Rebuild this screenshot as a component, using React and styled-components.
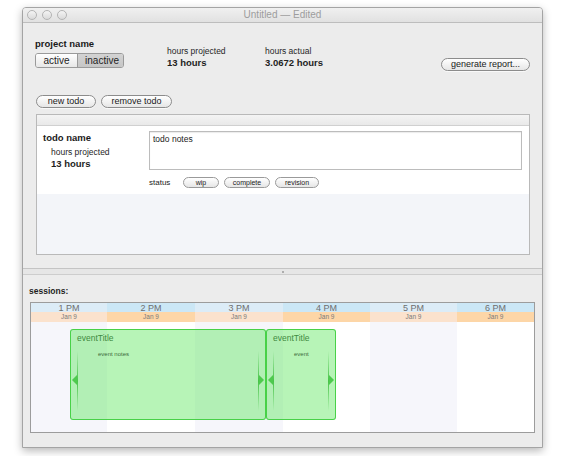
import React from 'react';
import styled, { createGlobalStyle } from 'styled-components';

const hours = [
  { label: '1 PM', width: 77 },
  { label: '2 PM', width: 88 },
  { label: '3 PM', width: 88 },
  { label: '4 PM', width: 87 },
  { label: '5 PM', width: 87 },
  { label: '6 PM', width: 78 },
];

const sessions = [
  { id: 1, title: 'eventTitle', notes: 'event notes', left: 39, width: 196 },
  { id: 2, title: 'eventTitle', notes: 'event', left: 235, width: 70 },
];

const App = () => {
  return (
    <>
      <GlobalStyle />
      <Page>
        <Window>
          <TitleBar>
            <Lights>
              <Light />
              <Light />
              <Light />
            </Lights>
            <WindowTitle>Untitled — Edited</WindowTitle>
          </TitleBar>

          <TopPane>
            <Header>
              <ProjectBlock>
                <Label>project name</Label>
                <Segmented>
                  <Segment>active</Segment>
                  <Segment $selected>inactive</Segment>
                </Segmented>
              </ProjectBlock>
              <Stat $width={98}>
                <SmallText>hours projected</SmallText>
                <Value>13 hours</Value>
              </Stat>
              <Stat>
                <SmallText>hours actual</SmallText>
                <Value>3.0672 hours</Value>
              </Stat>
              <PillButton $top={20} $width={89}>generate report...</PillButton>
            </Header>

            <Toolbar>
              <PillButton $width={60}>new todo</PillButton>
              <PillButton $width={71}>remove todo</PillButton>
            </Toolbar>

            <TodoTable>
              <TableHead />
              <TodoRow>
                <TodoInfo>
                  <Label>todo name</Label>
                  <Indented>
                    <SmallText>hours projected</SmallText>
                    <Value>13 hours</Value>
                  </Indented>
                </TodoInfo>
                <TodoDetail>
                  <Notes>todo notes</Notes>
                  <StatusRow>
                    <StatusLabel>status</StatusLabel>
                    <StatusButton $width={36}>wip</StatusButton>
                    <StatusButton $width={46}>complete</StatusButton>
                    <StatusButton $width={44}>revision</StatusButton>
                  </StatusRow>
                </TodoDetail>
              </TodoRow>
              <EmptyRows />
            </TodoTable>
          </TopPane>

          <Splitter>
            <Grip />
          </Splitter>

          <BottomPane>
            <SectionLabel>sessions:</SectionLabel>
            <Calendar>
              <Columns>
                {hours.map((h, i) => (
                  <Column key={h.label} $width={h.width}>
                    <HourCell $alt={i % 2 === 1}>{h.label}</HourCell>
                    <DateCell $alt={i % 2 === 1}>Jan 9</DateCell>
                    <Slot $alt={i % 2 === 1} />
                  </Column>
                ))}
              </Columns>
              <Track>
                {sessions.map((s) => (
                  <Session key={s.id} style={{ left: s.left, width: s.width }}>
                    <SessionTitle>{s.title}</SessionTitle>
                    <SessionNotes>{s.notes}</SessionNotes>
                    <Handle $side="left" />
                    <Handle $side="right" />
                  </Session>
                ))}
              </Track>
            </Calendar>
          </BottomPane>
        </Window>
      </Page>
    </>
  );
};

export default App;

const GlobalStyle = createGlobalStyle`
  body {
    margin: 0;
    background: #ffffff;
    font-family: "Liberation Sans", Arial, sans-serif;
    color: #1e1e1e;
  }
`;

const Page = styled.div`
  width: 570px;
  height: 456px;
  padding: 7px 0 0 22px;
  box-sizing: border-box;
`;

const Window = styled.div`
  width: 521px;
  height: 441px;
  box-sizing: border-box;
  border: 1px solid #a4a4a4;
  border-radius: 4px 4px 0 0;
  background: #ececec;
  box-shadow: 0 3px 9px rgba(0, 0, 0, 0.28);
  display: flex;
  flex-direction: column;
  overflow: hidden;
`;

const TitleBar = styled.div`
  height: 14px;
  flex: none;
  border-bottom: 1px solid #bdbdbd;
  background: linear-gradient(#f0f0f0, #e1e1e1);
  position: relative;
  display: flex;
  align-items: center;
  justify-content: center;
`;

const Lights = styled.div`
  position: absolute;
  left: 4px;
  top: 2px;
  display: flex;
  gap: 5px;
`;

const Light = styled.span`
  width: 8px;
  height: 8px;
  border-radius: 50%;
  border: 1px solid #b3b3b3;
  background: linear-gradient(#f4f4f4, #dadada);
`;

const WindowTitle = styled.span`
  font-size: 10px;
  color: #9d9d9d;
  line-height: 14px;
`;

const TopPane = styled.div`
  height: 245px;
  flex: none;
  box-sizing: border-box;
  padding: 15px 12px 0 12px;
`;

const Header = styled.div`
  display: flex;
  align-items: flex-start;
  height: 33px;
`;

const ProjectBlock = styled.div`
  width: 132px;
  display: flex;
  flex-direction: column;
  gap: 3px;
`;

const Label = styled.div`
  font-size: 9.5px;
  font-weight: 700;
  line-height: 12px;
  color: #1a1a1a;
`;

const Segmented = styled.div`
  display: flex;
  width: 89px;
  height: 15px;
  box-sizing: border-box;
  border: 1px solid #9a9a9a;
  border-radius: 3px;
  overflow: hidden;
`;

const Segment = styled.div`
  flex: ${(p) => (p.$selected ? '48px' : '41px')} 0 0;
  display: flex;
  align-items: center;
  justify-content: center;
  font-size: 10px;
  color: #1e1e1e;
  background: ${(p) =>
    p.$selected ? 'linear-gradient(#d3d3d3, #c6c6c6)' : 'linear-gradient(#ffffff, #e7e7e7)'};
  & + & {
    border-left: 1px solid #9a9a9a;
  }
`;

const Stat = styled.div`
  width: ${(p) => (p.$width ? `${p.$width}px` : 'auto')};
  flex: ${(p) => (p.$width ? 'none' : '1')};
  margin-top: 8px;
`;

const SmallText = styled.div`
  font-size: 8.5px;
  line-height: 11px;
  color: #262626;
`;

const Value = styled.div`
  font-size: 9.5px;
  font-weight: 700;
  line-height: 12px;
  color: #1e1e1e;
`;

const PillButton = styled.button`
  flex: none;
  width: ${(p) => p.$width}px;
  height: 13px;
  margin-top: ${(p) => p.$top || 0}px;
  padding: 0;
  box-sizing: border-box;
  border: 1px solid #8c8c8c;
  border-radius: 7px;
  background: linear-gradient(#ffffff, #e6e6e6);
  font-family: inherit;
  font-size: 9px;
  line-height: 11px;
  color: #1a1a1a;
  box-shadow: 0 1px 0 rgba(255, 255, 255, 0.7);
`;

const Toolbar = styled.div`
  display: flex;
  gap: 5px;
  margin: 24px 0 0 1px;
`;

const TodoTable = styled.div`
  margin: 6px 0 0 1px;
  height: 141px;
  box-sizing: border-box;
  border: 1px solid #b9b9b9;
  background: #f3f5f9;
  display: flex;
  flex-direction: column;
`;

const TableHead = styled.div`
  height: 10px;
  flex: none;
  border-bottom: 1px solid #d0d0d0;
  background: linear-gradient(#f4f4f4, #e9e9e9);
`;

const TodoRow = styled.div`
  height: 68px;
  flex: none;
  display: flex;
  background: #ffffff;
`;

const TodoInfo = styled.div`
  width: 112px;
  flex: none;
  box-sizing: border-box;
  padding: 6px 0 0 6px;
`;

const Indented = styled.div`
  padding-left: 8px;
  margin-top: 3px;
`;

const TodoDetail = styled.div`
  flex: 1;
  padding: 5px 7px 0 0;
`;

const Notes = styled.div`
  height: 39px;
  box-sizing: border-box;
  border: 1px solid #bcbcbc;
  box-shadow: inset 0 1px 1px rgba(0, 0, 0, 0.08);
  padding: 2px 3px;
  font-size: 8.5px;
  line-height: 11px;
  color: #222;
`;

const StatusRow = styled.div`
  display: flex;
  align-items: center;
  gap: 5px;
  margin-top: 7px;
`;

const StatusLabel = styled.span`
  width: 29px;
  font-size: 8px;
  color: #222;
`;

const StatusButton = styled(PillButton)`
  height: 11px;
  font-size: 7px;
  line-height: 9px;
  border-color: #9a9a9a;
`;

const EmptyRows = styled.div`
  flex: 1;
`;

const Splitter = styled.div`
  height: 5px;
  flex: none;
  border-top: 1px solid #c4c4c4;
  border-bottom: 1px solid #cdcdcd;
  background: #e6e6e6;
  display: flex;
  align-items: center;
  justify-content: center;
`;

const Grip = styled.span`
  width: 2px;
  height: 2px;
  border-radius: 50%;
  background: #9a9a9a;
`;

const BottomPane = styled.div`
  flex: 1;
  padding: 11px 7px 0 6px;
`;

const SectionLabel = styled.div`
  font-size: 8.5px;
  font-weight: 700;
  line-height: 11px;
  color: #1e1e1e;
`;

const Calendar = styled.div`
  position: relative;
  margin: 5px 0 0 1px;
  height: 131px;
  box-sizing: border-box;
  border: 1px solid #9c9c9c;
  background: #ffffff;
`;

const Columns = styled.div`
  display: flex;
  height: 100%;
`;

const Column = styled.div`
  width: ${(p) => p.$width}px;
  flex: ${(p) => (p.$width < 80 ? '1 1 auto' : 'none')};
  display: flex;
  flex-direction: column;
`;

const HourCell = styled.div`
  height: 9px;
  background: ${(p) => (p.$alt ? '#cbe7f6' : '#dcecf7')};
  text-align: center;
  font-size: 9px;
  line-height: 10px;
  color: #6e6e6e;
`;

const DateCell = styled.div`
  height: 10px;
  background: ${(p) => (p.$alt ? '#fdd6a7' : '#fbe2cd')};
  text-align: center;
  font-size: 6.5px;
  line-height: 10px;
  color: #7a7a7a;
`;

const Slot = styled.div`
  flex: 1;
  background: ${(p) => (p.$alt ? '#ffffff' : '#f6f6fb')};
`;

const Track = styled.div`
  position: absolute;
  left: 0;
  right: 0;
  top: 19px;
  bottom: 0;
`;

const Session = styled.div`
  position: absolute;
  top: 7px;
  height: 91px;
  box-sizing: border-box;
  border: 1px solid rgba(60, 205, 60, 0.9);
  border-radius: 3px;
  background: rgba(95, 230, 95, 0.45);
  padding: 3px 0 0 6px;
`;

const SessionTitle = styled.div`
  font-size: 8.5px;
  line-height: 10px;
  color: #3f8a3f;
`;

const SessionNotes = styled.div`
  margin: 7px 0 0 21px;
  font-size: 6px;
  line-height: 8px;
  color: #3c6b3c;
`;

const Handle = styled.span`
  position: absolute;
  top: 21px;
  height: 60px;
  width: 1px;
  ${(p) => (p.$side === 'left' ? 'left: 6px;' : 'right: 6px;')}
  background: linear-gradient(rgba(60, 190, 60, 0), rgba(60, 190, 60, 0.9) 50%, rgba(60, 190, 60, 0));

  &::after {
    content: '';
    position: absolute;
    top: 24px;
    ${(p) => (p.$side === 'left' ? 'right: 1px;' : 'left: 1px;')}
    border-top: 5px solid transparent;
    border-bottom: 5px solid transparent;
    ${(p) =>
      p.$side === 'left'
        ? 'border-right: 5px solid rgba(60, 195, 60, 0.85);'
        : 'border-left: 5px solid rgba(60, 195, 60, 0.85);'}
  }
`;
